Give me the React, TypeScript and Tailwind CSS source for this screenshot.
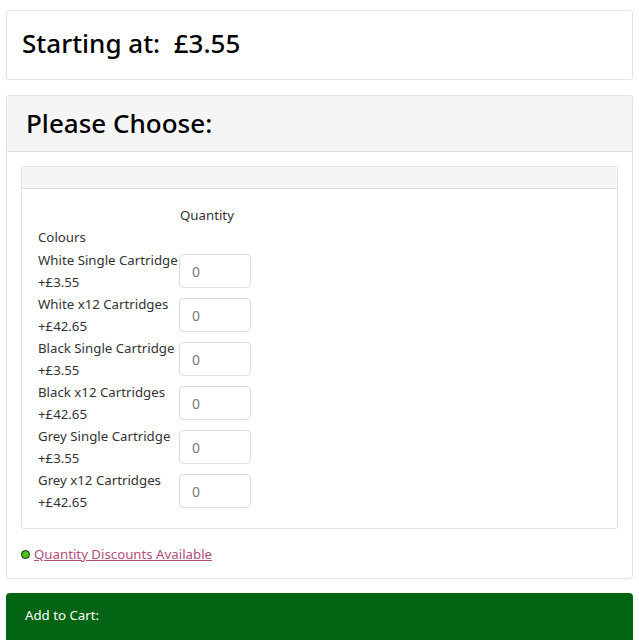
import React from "react";

const options = [
  { name: "White Single Cartridge", price: "+£3.55" },
  { name: "White x12 Cartridges", price: "+£42.65" },
  { name: "Black Single Cartridge", price: "+£3.55" },
  { name: "Black x12 Cartridges", price: "+£42.65" },
  { name: "Grey Single Cartridge", price: "+£3.55" },
  { name: "Grey x12 Cartridges", price: "+£42.65" },
];

export default function App() {
  return (
    <div className="bg-white min-h-[640px] px-[6px] pt-[10px] text-[#222] font-['Noto_Sans',sans-serif]">
      <div className="border border-[#e3e3e3] rounded-[3px] h-[70px] flex items-center px-[15px] pb-[4px]">
        <h2 className="text-[26px] font-medium text-black">Starting at:&nbsp; £3.55</h2>
      </div>

      <div className="mt-[15px] border border-[#e3e3e3] rounded-[3px]">
        <div className="bg-[#f5f5f5] border-b border-[#dedede] h-[56px] flex items-center px-[19px]">
          <h2 className="text-[26px] font-medium text-black">Please Choose:</h2>
        </div>
        <div className="px-[14px] pt-[14px] pb-[13px]">
          <div className="border border-[#e3e3e3] rounded-[3px]">
            <div className="bg-[#f5f5f5] border-b border-[#dedede] h-[22px]"></div>
            <div className="px-[16px] pt-[15px] pb-[15px] text-[13.25px] leading-[22px] text-[#333]">
              <div className="grid grid-cols-[141px_auto]">
                <div></div>
                <div className="pl-[1px]">Quantity</div>
                <div className="col-span-2 pb-[1px]">Colours</div>
                {options.map((o, i) => (
                  <React.Fragment key={i}>
                    <div className="whitespace-nowrap">
                      <div>{o.name}</div>
                      <div>{o.price}</div>
                    </div>
                    <div className="flex items-center">
                      <input
                        defaultValue="0"
                        className="w-[72px] h-[34px] border border-[#ddd] rounded-[4px] px-[12px] text-[14px] text-[#777] outline-none"
                      />
                    </div>
                  </React.Fragment>
                ))}
              </div>
            </div>
          </div>
          <div className="mt-[14px] flex items-center gap-[4px] text-[13.25px] leading-[22px]">
            <span className="w-[9px] h-[9px] rounded-full bg-[#4cc21e] border-[1.5px] border-[#10250a]"></span>
            <a href="#" className="text-[#b04d7b] underline">Quantity Discounts Available</a>
          </div>
        </div>
      </div>

      <div className="mt-[14px] bg-[#036414] rounded-t-[4px] h-[50px] px-[19px] pt-[11px] text-[13.25px] leading-[22px] text-white">
        Add to Cart:
      </div>
    </div>
  );
}
